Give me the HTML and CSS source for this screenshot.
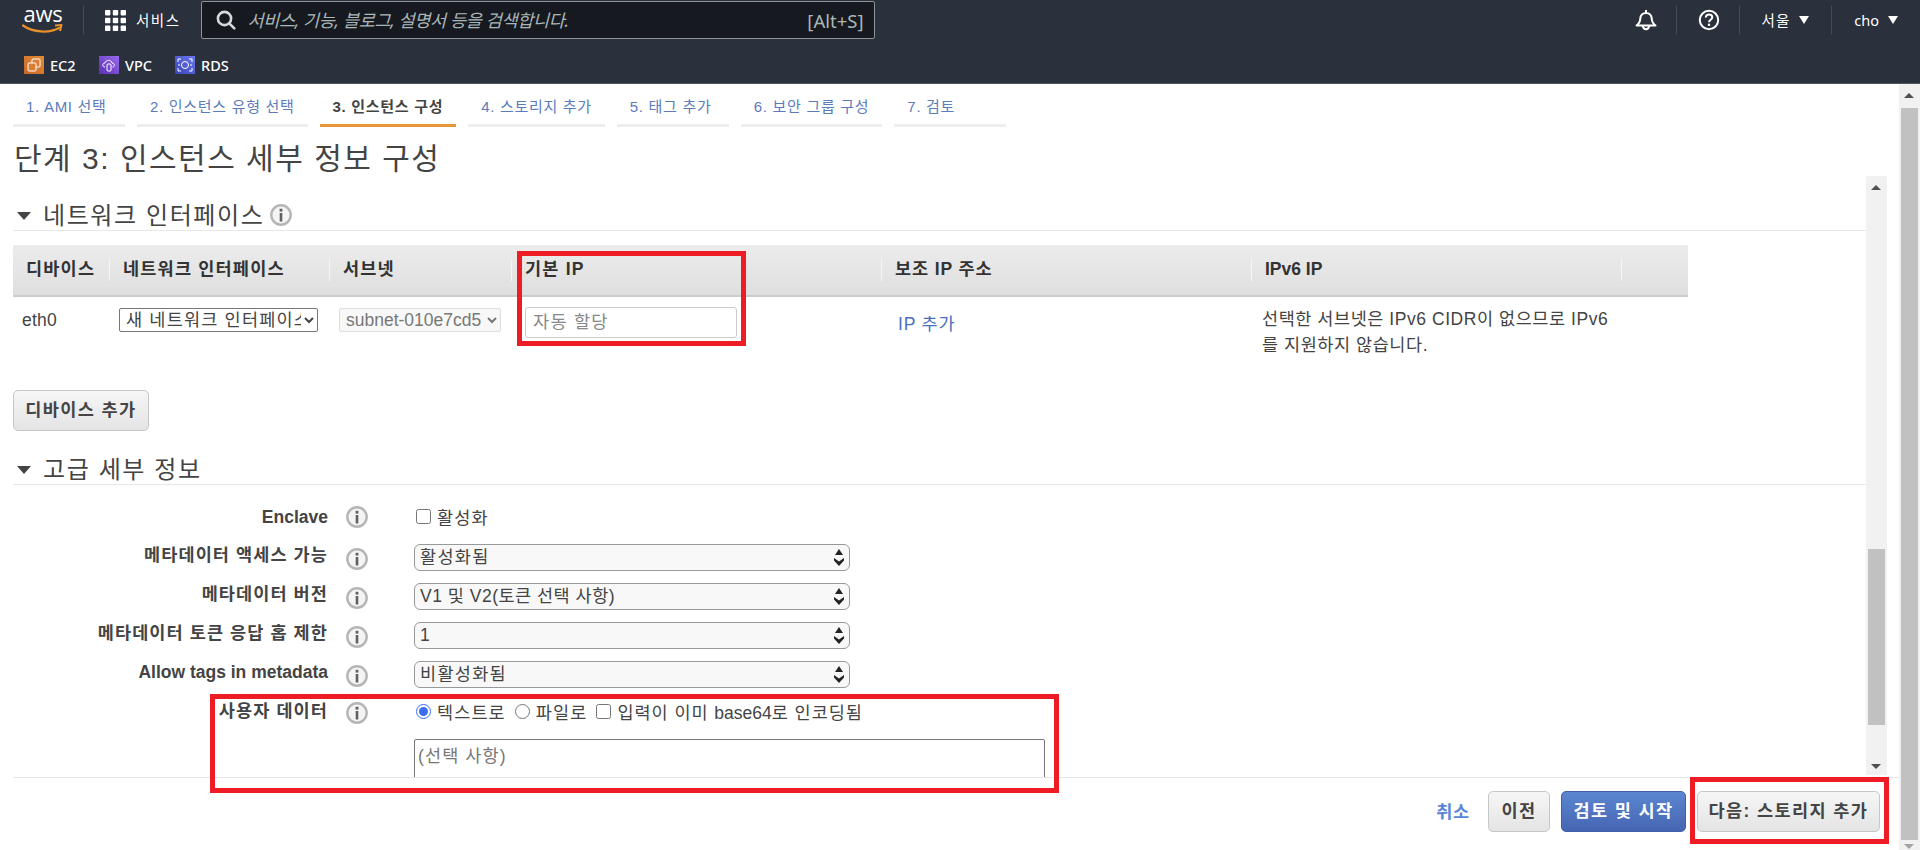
FILE: index.html
```html
<!DOCTYPE html>
<html lang="ko">
<head>
<meta charset="utf-8">
<title>인스턴스 세부 정보 구성</title>
<link rel="stylesheet" href="styles.css">
</head>
<body>
<header class="topbar">
  <div class="nav-row">
    <div class="logo">
      <span class="logo-text">aws</span>
      <svg class="smile" width="42" height="10" viewBox="0 0 42 10"><path d="M1 1.5C11 8.5 27 9.5 37 4" fill="none" stroke="#e8912c" stroke-width="2.2" stroke-linecap="round"/><path d="M33 1.5l6.5-.5-1.5 6" fill="none" stroke="#e8912c" stroke-width="2" stroke-linejoin="round"/></svg>
    </div>
    <span class="nav-div logo-div"></span>
    <svg class="grid-icon" width="21" height="21" viewBox="0 0 21 21" fill="#fff"><rect x="0" y="0" width="5.4" height="5.4" rx=".8"/><rect x="7.8" y="0" width="5.4" height="5.4" rx=".8"/><rect x="15.6" y="0" width="5.4" height="5.4" rx=".8"/><rect x="0" y="7.8" width="5.4" height="5.4" rx=".8"/><rect x="7.8" y="7.8" width="5.4" height="5.4" rx=".8"/><rect x="15.6" y="7.8" width="5.4" height="5.4" rx=".8"/><rect x="0" y="15.6" width="5.4" height="5.4" rx=".8"/><rect x="7.8" y="15.6" width="5.4" height="5.4" rx=".8"/><rect x="15.6" y="15.6" width="5.4" height="5.4" rx=".8"/></svg>
    <span class="nav-label services">서비스</span>
    <div class="search">
      <svg class="search-icon" width="20" height="20" viewBox="0 0 20 20" fill="none" stroke="#d5dbdb" stroke-width="2.6"><circle cx="8.5" cy="8.5" r="6.6"/><path d="M13.3 13.3l5 5" stroke-linecap="round"/></svg>
      <input class="search-input" type="text" placeholder="서비스, 기능, 블로그, 설명서 등을 검색합니다.">
      <span class="search-key">[Alt+S]</span>
    </div>
    <div class="nav-right">
      <svg class="bell" width="22" height="22" viewBox="0 0 22 22" fill="none" stroke="#fff" stroke-width="2"><path d="M1.5 16.5h19c-2.3-1.6-3.6-3.5-3.8-7-.2-3.2-2.4-5.6-5.7-5.6S5.500 6.300 5.300 9.500c-.2 3.500-1.500 5.400-3.800 7z" stroke-linejoin="round"/><path d="M11 1v3"/><path d="M8 17c0 4.200 6 4.200 6 0"/></svg>
      <span class="nav-div div-a"></span>
      <svg class="help" width="22" height="22" viewBox="0 0 22 22" fill="none" stroke="#fff"><circle cx="11" cy="11" r="9.200" stroke-width="2"/><path d="M7.800 8.500c.2-4.200 6.500-4 6.500-.2 0 2.500-3.300 2.500-3.300 5" stroke-width="2"/><rect x="9.900" y="14.700" width="2.200" height="2.200" fill="#fff" stroke="none"/></svg>
      <span class="nav-div div-b"></span>
      <span class="nav-label region">서울</span><span class="nav-caret"></span>
      <span class="nav-div div-c"></span>
      <span class="nav-label user">cho</span><span class="nav-caret"></span>
    </div>
  </div>
  <div class="fav-row">
    <svg class="fav-icon" width="20" height="18" viewBox="0 0 20 18"><defs><linearGradient id="g1" x1="0" y1="1" x2="1" y2="0"><stop offset="0" stop-color="#c8672a"/><stop offset="1" stop-color="#e58c35"/></linearGradient></defs><rect width="20" height="18" fill="url(#g1)"/><g fill="none" stroke="#fff" stroke-width="1"><rect x="8" y="3" width="8" height="8" rx="1"/><rect x="4" y="7" width="8" height="8" rx="1" fill="#d97f32"/></g></svg>
    <span class="fav-label fav-ec2">EC2</span>
    <svg class="fav-icon" width="20" height="18" viewBox="0 0 20 18"><defs><linearGradient id="g2" x1="0" y1="1" x2="1" y2="0"><stop offset="0" stop-color="#5a30b5"/><stop offset="1" stop-color="#9a6af0"/></linearGradient></defs><rect width="20" height="18" fill="url(#g2)"/><path d="M6 11c-3 0-3-4 0-4 .5-3.500 6.500-3.500 7 0 3 0 3 4 .5 4" fill="none" stroke="#fff"/><rect x="8" y="8" width="4" height="7" rx="1" fill="none" stroke="#fff"/></svg>
    <span class="fav-label fav-vpc">VPC</span>
    <svg class="fav-icon" width="20" height="18" viewBox="0 0 20 18"><defs><linearGradient id="g3" x1="0" y1="1" x2="1" y2="0"><stop offset="0" stop-color="#3a44b8"/><stop offset="1" stop-color="#6a78ec"/></linearGradient></defs><rect width="20" height="18" fill="url(#g3)"/><g fill="none" stroke="#fff"><ellipse cx="10" cy="9" rx="3.500" ry="3.500"/><path d="M3 6V3h3M14 3h3v3M17 12v3h-3M6 15H3v-3"/><path d="M5 9h-2M15 9h2"/></g></svg>
    <span class="fav-label">RDS</span>
  </div>
</header>

<div class="page">
  <main class="wizard">
    <nav class="tabs">
      <a class="tab">1. AMI 선택</a>
      <a class="tab">2. 인스턴스 유형 선택</a>
      <a class="tab tab-active">3. 인스턴스 구성</a>
      <a class="tab">4. 스토리지 추가</a>
      <a class="tab">5. 태그 추가</a>
      <a class="tab">6. 보안 그룹 구성</a>
      <a class="tab">7. 검토</a>
    </nav>
    <h1 class="title">단계 3: 인스턴스 세부 정보 구성</h1>

    <div class="panel">
      <div class="panel-body">
        <section class="section-head first">
          <span class="caret"></span><h2 class="section-title">네트워크 인터페이스</h2>
          <svg class="info info-head" width="22" height="22" viewBox="0 0 22 22"><use href="#info"/></svg>
        </section>

        <table class="net-table">
          <colgroup><col class="c1"><col class="c2"><col class="c3"><col class="c4"><col class="c4"><col class="c4"><col class="c7"></colgroup>
          <thead>
            <tr>
              <th><span class="th-in nosep">디바이스</span></th>
              <th><span class="th-in">네트워크 인터페이스</span></th>
              <th><span class="th-in">서브넷</span></th>
              <th><span class="th-in">기본 IP</span></th>
              <th><span class="th-in th-mixed">보조 IP 주소</span></th>
              <th><span class="th-in th-latin">IPv6 IP</span></th>
              <th><span class="th-in"></span></th>
            </tr>
          </thead>
          <tbody>
            <tr>
              <td class="td-dev">eth0</td>
              <td class="td-sel"><select class="mini-select w1"><option>새 네트워크 인터페이스</option></select></td>
              <td class="td-sel"><select class="mini-select w2" disabled><option>subnet-010e7cd5</option></select></td>
              <td class="td-ip"><input class="ip-input" type="text" placeholder="자동 할당"></td>
              <td class="td-link"><a class="link">IP 추가</a></td>
              <td class="td-note" colspan="2"><p class="note">선택한 서브넷은 IPv6 CIDR이 없으므로 IPv6<br>를 지원하지 않습니다.</p></td>
            </tr>
          </tbody>
        </table>

        <button class="btn btn-add" type="button">디바이스 추가</button>

        <section class="section-head second">
          <span class="caret"></span><h2 class="section-title">고급 세부 정보</h2>
        </section>

        <div class="form">
          <div class="f-label l-top">Enclave</div>
          <svg class="info i-top" width="22" height="22" viewBox="0 0 22 22"><use href="#info"/></svg>
          <div class="f-ctl check-row c-top"><label class="opt"><input type="checkbox"><span>활성화</span></label></div>

          <div class="f-label">메타데이터 액세스 가능</div>
          <svg class="info" width="22" height="22" viewBox="0 0 22 22"><use href="#info"/></svg>
          <div class="sel-wrap"><select class="big-select"><option>활성화됨</option></select><svg class="updown" width="12" height="20" viewBox="0 0 12 20"><use href="#updown"/></svg></div>

          <div class="f-label">메타데이터 버전</div>
          <svg class="info" width="22" height="22" viewBox="0 0 22 22"><use href="#info"/></svg>
          <div class="sel-wrap"><select class="big-select tight"><option>V1 및 V2(토큰 선택 사항)</option></select><svg class="updown" width="12" height="20" viewBox="0 0 12 20"><use href="#updown"/></svg></div>

          <div class="f-label">메타데이터 토큰 응답 홉 제한</div>
          <svg class="info" width="22" height="22" viewBox="0 0 22 22"><use href="#info"/></svg>
          <div class="sel-wrap"><select class="big-select"><option>1</option></select><svg class="updown" width="12" height="20" viewBox="0 0 12 20"><use href="#updown"/></svg></div>

          <div class="f-label l-latin">Allow tags in metadata</div>
          <svg class="info" width="22" height="22" viewBox="0 0 22 22"><use href="#info"/></svg>
          <div class="sel-wrap"><select class="big-select"><option>비활성화됨</option></select><svg class="updown" width="12" height="20" viewBox="0 0 12 20"><use href="#updown"/></svg></div>

          <div class="f-label">사용자 데이터</div>
          <svg class="info i-ud" width="22" height="22" viewBox="0 0 22 22"><use href="#info"/></svg>
          <div class="f-ctl ud">
            <div class="check-row">
              <label class="opt"><input type="radio" name="ud" checked><span>텍스트로</span></label>
              <label class="opt"><input type="radio" name="ud"><span>파일로</span></label>
              <label class="opt opt-long"><input type="checkbox"><span>입력이 이미 <span class="latin">base64</span>로 인코딩됨</span></label>
            </div>
            <textarea class="ud-text" placeholder="(선택 사항)"></textarea>
          </div>
        </div>
      </div>
      <div class="vbar inner">
        <span class="arrow up"></span>
        <span class="thumb"></span>
        <span class="arrow down"></span>
      </div>
    </div>

    <footer class="actions">
      <a class="link cancel">취소</a>
      <button class="btn btn-prev" type="button">이전</button>
      <button class="btn btn-primary" type="button">검토 및 시작</button>
      <button class="btn btn-next" type="button">다음: 스토리지 추가</button>
    </footer>
  </main>
  <div class="vbar outer">
    <span class="arrow up"></span>
    <span class="thumb"></span>
    <span class="arrow down pale"></span>
  </div>
</div>

<div class="mark mark-ip"></div>
<div class="mark mark-ud"></div>
<div class="mark mark-next"></div>

<svg class="defs" width="0" height="0">
  <defs>
    <g id="info">
      <circle cx="11" cy="11" r="9.700" fill="#f4f4f4" stroke="#b5b5b5" stroke-width="2.400"/>
      <rect x="9.600" y="4.800" width="2.800" height="2.800" fill="#606060"/>
      <rect x="9.700" y="9" width="2.600" height="8.500" fill="#606060"/>
    </g>
    <g id="updown" fill="#222">
      <path d="M6 1l4 6H2z"/>
      <path d="M1 10l5 3.500 5-3.500v2.500L6 18 1 12.500z"/>
    </g>
  </defs>
</svg>
</body>
</html>
```
FILE: styles.css
```css
* { box-sizing: border-box; }
html, body { margin: 0; height: 850px; overflow: hidden; }
body {
  background: #fff;
  color: #444;
  font-family: "Liberation Sans", "Noto Sans CJK KR", sans-serif;
  font-size: 17.5px;
  position: relative;
}
.defs { position: absolute; }

/* top bar */
.topbar {
  height: 84px;
  background: #2a303c;
  border-bottom: 1px solid #4c5361;
  font-family: "Noto Sans", "Noto Sans CJK KR", sans-serif;
  color: #fff;
}
.nav-row { height: 40px; display: flex; align-items: center; padding-left: 22px; }
.logo { width: 42px; height: 34px; display: flex; flex-direction: column; align-items: center; }
.logo-text { font-size: 22px; line-height: 23px; letter-spacing: -.2px; margin-top: -1px; font-family: "Open Sans", sans-serif; }
.smile { margin-top: -1px; }
.nav-div { width: 1px; height: 28px; background: #444b58; display: block; }
.logo-div { margin-left: 19px; }
.grid-icon { margin-left: 21px; }
.nav-label { font-size: 14.500px; line-height: 20px; }
.services { margin-left: 10px; letter-spacing: 1.500px; }
.search {
  margin-left: 20px;
  width: 674px;
  height: 38px;
  background: #16191f;
  border: 1px solid #8d9599;
  border-radius: 2px;
  display: flex;
  align-items: center;
  padding: 0 10px 0 14px;
}
.search-icon { flex: none; }
.search-input {
  flex: 1;
  min-width: 0;
  margin-left: 12px;
  background: transparent;
  border: 0;
  outline: 0;
  padding: 0;
  color: #fff;
  font-family: inherit;
  font-size: 17.500px;
  font-style: italic;
  letter-spacing: -.35px;
}
.search-input::placeholder { color: #aab7b8; opacity: 1; }
.search-key { color: #aab7b8; font-size: 18.500px; }
.nav-right { margin-left: auto; display: flex; align-items: center; padding-right: 22px; }
.nav-caret {
  width: 0; height: 0;
  border-left: 5.500px solid transparent;
  border-right: 5.500px solid transparent;
  border-top: 8px solid #fff;
}
.div-a { margin-left: 19px; }
.help { margin-left: 21px; }
.div-b { margin-left: 19px; }
.region { margin-left: 22px; letter-spacing: 1px; }
.region + .nav-caret { margin-left: 9px; }
.div-c { margin-left: 22px; }
.user { margin-left: 22px; }
.user + .nav-caret { margin-left: 9px; }

.fav-row { height: 43px; display: flex; align-items: center; padding: 7px 0 0 24px; }
.fav-icon { flex: none; }
.fav-label { margin-left: 6px; width: 49px; font-size: 14.500px; font-weight: 500; }
.fav-ec2 { width: 49px; }
.fav-vpc { width: 50px; }

/* page */
.page { display: flex; height: 766px; }
.wizard { width: 1899px; flex: none; display: flex; flex-direction: column; }

.tabs { display: flex; gap: 12px; margin-left: 13px; height: 43px; }
.tab {
  min-width: 112px;
  padding: 12px 13px 0;
  line-height: 22px;
  font-size: 15px;
  letter-spacing: .7px;
  color: #5a7cbb;
  border-bottom: 3px solid #eee;
}
.tab-active { color: #444; font-weight: 700; border-bottom-color: #e8963a; }

.title {
  margin: 10px 0 0 14px;
  height: 39px;
  font-size: 30px;
  line-height: 44px;
  font-weight: 400;
  letter-spacing: 1.500px;
  color: #444;
}

.panel { display: flex; height: 601px; margin-left: 13px; width: 1874px; }
.panel-body { flex: 1; min-width: 0; overflow: hidden; }

.section-head { display: flex; align-items: center; border-bottom: 1px solid #e8e8e8; }
.section-head.first { height: 55px; padding-top: 25px; }
.section-head.second { height: 54px; margin-top: 0; padding-top: 25px; }
.caret {
  width: 0; height: 0;
  margin: 0 12px 0 4px;
  border-left: 7.500px solid transparent;
  border-right: 7.500px solid transparent;
  border-top: 8px solid #444;
}
.section-title { margin: 0; font-size: 24px; font-weight: 400; line-height: 30px; letter-spacing: 1.600px; color: #444; }
.info { flex: none; display: block; margin-top: 4px; }
.info-head { margin: -2px 0 0 6px; }

.net-table { margin-top: 14px; border-collapse: collapse; table-layout: fixed; width: 1675px; }
.c1 { width: 96px; } .c2 { width: 220px; } .c3 { width: 182px; } .c4 { width: 370px; } .c7 { width: 67px; }
.net-table th {
  height: 51px;
  padding: 0;
  text-align: left;
  background: linear-gradient(#ececec, #dfdfdf);
  border-bottom: 2px solid #ccc;
  font-size: 17.500px;
  color: #333;
}
.th-in {
  display: block;
  height: 22px;
  line-height: 20px;
  padding-left: 13px;
  letter-spacing: 1.200px;
  border-left: 1px solid #f6f6f6;
}
.th-mixed { letter-spacing: .9px; }
.th-latin { letter-spacing: 0; }
.nosep { border-left: 0; }
.net-table td { padding: 0; vertical-align: top; height: 61px; }
.td-dev { padding: 11px 0 0 9px !important; line-height: 24px; letter-spacing: .2px; }
.td-sel { padding: 11px 0 0 10px !important; }
.mini-select {
  height: 24px;
  padding: 0 0 0 2px;
  font-family: inherit;
  font-size: 17.500px;
  color: #444;
  background: #fff;
  border: 1px solid #767676;
  border-radius: 2px;
}
.w1 { width: 199px; letter-spacing: 1.200px; }
.w2 { width: 162px; color: #777; border-color: #ddd; background: #f8f8f8; opacity: 1; }
.td-ip { padding: 10px 0 0 14px !important; }
.ip-input {
  display: block;
  width: 212px;
  height: 31px;
  padding: 0 7px;
  font-family: inherit;
  font-size: 17.500px;
  letter-spacing: 1.300px;
  border: 1px solid #ccc;
  border-radius: 3px;
  outline: 0;
}
.ip-input::placeholder { color: #888; opacity: 1; }
.td-link { padding: 15px 0 0 17px !important; line-height: 24px; }
.link { color: #4a6fc0; letter-spacing: .8px; }
.td-note { padding: 9px 0 0 11px !important; }
.note { margin: 0; line-height: 26px; letter-spacing: .55px; color: #444; }

.btn {
  height: 41px;
  font-family: inherit;
  font-size: 17.500px;
  font-weight: 700;
  letter-spacing: 1.400px;
  color: #444;
  background: linear-gradient(#f6f6f6, #e4e4e4);
  border: 1px solid #c6c6c6;
  border-radius: 5px;
  padding: 0 0 5px;
}
.btn-add { display: block; width: 136px; margin-top: 32px; }
.btn-prev { width: 62px; }
.btn-next { width: 183px; }
.btn-primary { width: 125px; color: #fff; background: linear-gradient(#5c86d0, #4565b2); border-color: #3f5fa8; }

.form {
  display: grid;
  grid-template-columns: 315px 22px 464px;
  column-gap: 18px;
  grid-auto-rows: 39px;
  margin-top: 20px;
  align-items: start;
}
.form > .sel-wrap, .form > .f-ctl { margin-left: 28px; }
.f-label { text-align: right; font-weight: 700; line-height: 22px; color: #444; letter-spacing: 1.100px; white-space: nowrap; }
.l-top { margin-top: 1px; letter-spacing: 0; }
.l-latin { letter-spacing: 0; }
.i-top { margin-top: 1px; }
.i-ud { margin-top: 2px; }
.c-top { margin-top: 0; }
.check-row { display: flex; align-items: center; gap: 7px; height: 22px; white-space: nowrap; }
.opt { display: flex; align-items: center; gap: 6px; letter-spacing: 1.100px; }
.opt-long { letter-spacing: .95px; }
.opt input { margin: 0 0 0 2px; width: 15px; height: 15px; accent-color: #3b6ff0; }
.latin { letter-spacing: 0; }
.sel-wrap { position: relative; height: 27px; width: 436px; }
.big-select {
  display: block;
  appearance: none;
  width: 436px;
  height: 27px;
  padding: 0 0 2px 5px;
  font-family: inherit;
  font-size: 17.500px;
  letter-spacing: 1.300px;
  color: #444;
  background: #f8f8f8;
  border: 1px solid #999;
  border-radius: 6px;
}
.tight { letter-spacing: .500px; }
.updown { position: absolute; right: 5px; top: 4px; pointer-events: none; }
.ud { width: 631px; height: 120px; overflow: visible; }
.ud-text {
  display: block;
  margin-top: 17px;
  width: 631px;
  height: 100px;
  padding: 2px 3px;
  font-family: inherit;
  font-size: 17.500px;
  letter-spacing: 1.100px;
  border: 1px solid #767676;
  border-radius: 2px;
  resize: none;
  outline: 0;
}
.ud-text::placeholder { color: #777; opacity: 1; }

/* scroll bars */
.vbar { flex: none; width: 21px; background: #f1f1f1; display: flex; flex-direction: column; align-items: center; position: relative; }
.vbar .thumb { display: block; width: 17px; background: #c1c1c1; }
.inner { height: 599px; padding-top: 373px; }
.inner .thumb { height: 176px; }
.outer { height: 766px; padding-top: 24px; }
.outer .thumb { height: 732px; }
.arrow { position: absolute; width: 0; height: 0; left: 5px; border-left: 5px solid transparent; border-right: 5px solid transparent; }
.up { top: 9px; border-bottom: 5px solid #505050; }
.down { bottom: 6px; border-top: 5px solid #505050; }
.pale { bottom: 1px; border-top-color: #a3a3a3; }

/* footer */
.actions {
  flex: 1;
  margin-left: 13px;
  border-top: 1px solid #e8e8e8;
  display: flex;
  justify-content: flex-end;
  align-items: flex-start;
  gap: 11px;
  padding: 13px 19px 0 0;
}
.cancel { align-self: flex-start; margin: 9px 7px 0 0; color: #5a86d8; font-weight: 700; line-height: 24px; }

/* red annotation boxes */
.mark { position: absolute; border: 5px solid #ee1c25; pointer-events: none; }
.mark-ip { left: 517px; top: 251px; width: 229px; height: 95px; }
.mark-ud { left: 210px; top: 694px; width: 849px; height: 99px; }
.mark-next { left: 1690px; top: 777px; width: 199px; height: 67px; }
```
